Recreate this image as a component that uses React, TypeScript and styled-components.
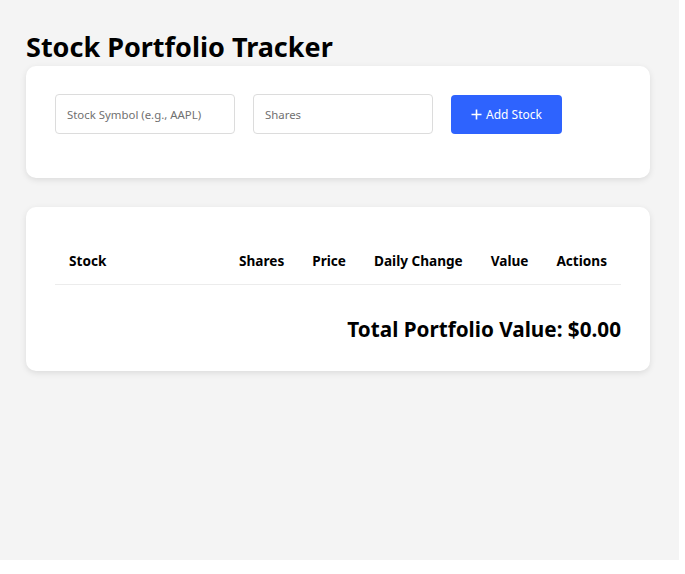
import React from "react";
import styled, { createGlobalStyle } from "styled-components";

const Global = createGlobalStyle`
  html, body { margin: 0; padding: 0; background: #ffffff; }
  body { font-family: "Noto Sans", "Open Sans", sans-serif; color: #000; }
  * { box-sizing: border-box; }
`;

const Page = styled.div`
  width: 679px;
  height: 560px;
  background: #f4f4f4;
  padding: 28px 29px 0 26px;
`;

const Title = styled.h1`
  margin: 0 0 0 0;
  font-size: 27px;
  font-weight: 700;
  line-height: 38px;
`;

const Card = styled.section<{ $mb?: number }>`
  background: #fff;
  border-radius: 10px;
  box-shadow: 0 2px 6px rgba(0, 0, 0, 0.1);
  padding: 28px 29px;
  margin-bottom: ${(p) => p.$mb ?? 0}px;
`;

const Form = styled.form`
  display: flex;
  align-items: center;
  gap: 18px;
  margin-bottom: 16px;
`;

const Input = styled.input`
  width: 180px;
  height: 40px;
  border: 1px solid #dcdcdc;
  border-radius: 4px;
  padding: 0 11px;
  font-family: "Noto Sans", sans-serif;
  font-size: 11.4px;
  outline: none;
  &::placeholder { color: #707070; }
`;

const Button = styled.button`
  display: flex;
  align-items: center;
  justify-content: center;
  gap: 4px;
  width: 111px;
  height: 39px;
  border: none;
  border-radius: 4px;
  background: #2e63fe;
  color: #fff;
  font-family: "Noto Sans", sans-serif;
  font-size: 12px;
  cursor: pointer;
`;

const Table = styled.table`
  width: 100%;
  border-collapse: collapse;
  margin-top: 7px;
`;

const Th = styled.th<{ $grow?: boolean }>`
  text-align: left;
  font-size: 13.6px;
  font-weight: 700;
  padding: 9px 14px 14px;
  border-bottom: 1px solid #ececec;
  white-space: nowrap;
  width: ${(p) => (p.$grow ? "auto" : "1px")};
`;

const Total = styled.div`
  text-align: right;
  font-size: 20.7px;
  font-weight: 700;
  margin-top: 30px;
  line-height: 28px;
`;

const Plus = () => (
  <svg width="11" height="11" viewBox="0 0 11 11" fill="none" stroke="#fff" strokeWidth="1.6">
    <path d="M5.5 0.5v10M0.5 5.5h10" />
  </svg>
);

export default function App() {
  return (
    <Page>
      <Global />
      <Title>Stock Portfolio Tracker</Title>
      <Card $mb={29}>
        <Form onSubmit={(e) => e.preventDefault()}>
          <Input placeholder="Stock Symbol (e.g., AAPL)" />
          <Input placeholder="Shares" />
          <Button type="submit">
            <Plus />
            Add Stock
          </Button>
        </Form>
      </Card>
      <Card>
        <Table>
          <thead>
            <tr>
              <Th $grow>Stock</Th>
              <Th>Shares</Th>
              <Th>Price</Th>
              <Th>Daily Change</Th>
              <Th>Value</Th>
              <Th>Actions</Th>
            </tr>
          </thead>
          <tbody />
        </Table>
        <Total>Total Portfolio Value: $0.00</Total>
      </Card>
    </Page>
  );
}
